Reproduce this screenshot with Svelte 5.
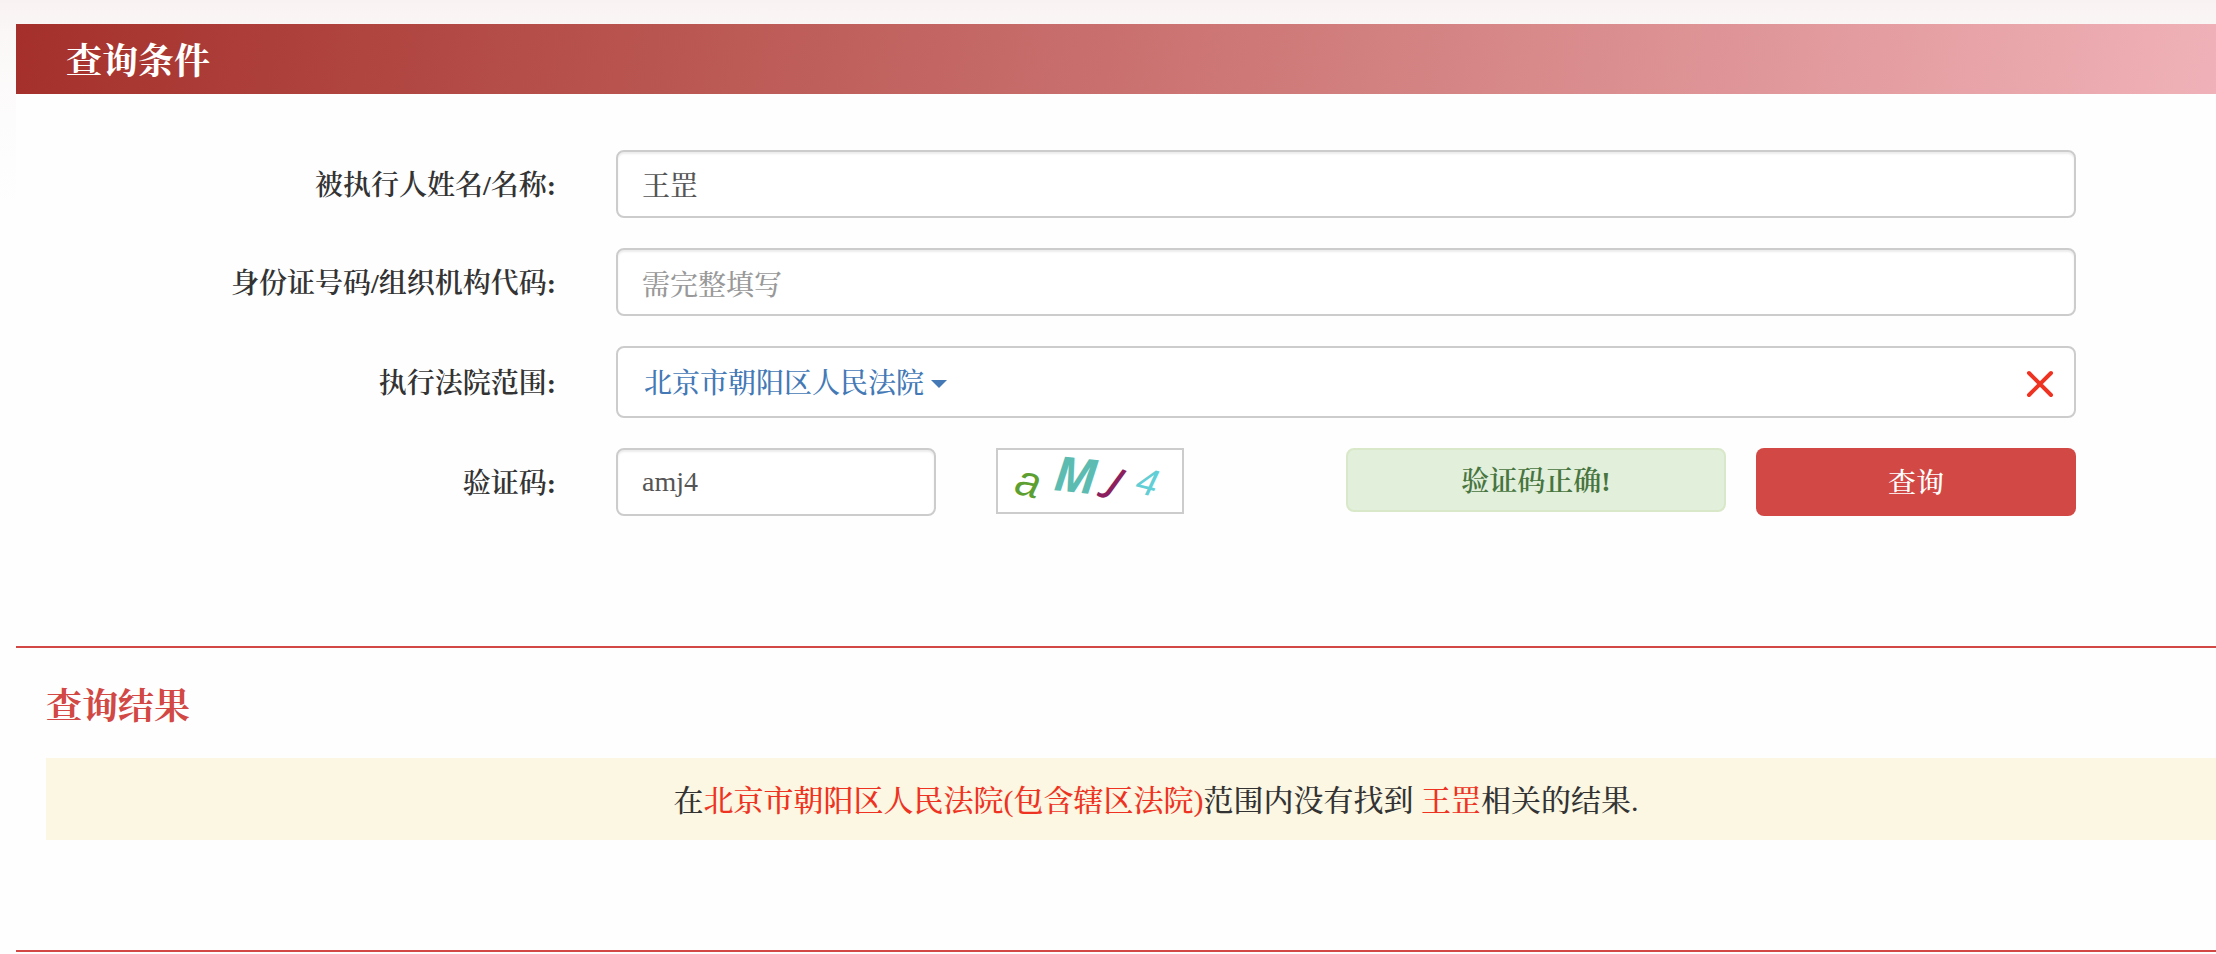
<script>
  let name = '王罡';
  let cardNum = '';
  let court = '北京市朝阳区人民法院';
  let code = 'amj4';

  const courts = ['北京市朝阳区人民法院'];

  const clearCourt = () => {
    court = '';
  };
</script>

<main class="page">
  <div class="panel">
    <h2 class="panel-heading">查询条件</h2>

    <form class="query" on:submit|preventDefault>
      <div class="row">
        <label for="pName">被执行人姓名/名称:</label>
        <div class="field">
          <input id="pName" type="text" bind:value={name} />
        </div>
      </div>

      <div class="row">
        <label for="pCardNum">身份证号码/组织机构代码:</label>
        <div class="field">
          <input id="pCardNum" type="text" placeholder="需完整填写" bind:value={cardNum} />
        </div>
      </div>

      <div class="row">
        <label for="selectCourt">执行法院范围:</label>
        <div class="field">
          <div class="court">
            <select id="selectCourt" bind:value={court}>
              {#each courts as item}
                <option value={item}>{item}</option>
              {/each}
            </select>
            <svg class="caret" viewBox="0 0 16 8" aria-hidden="true"><path d="M0 0h16L8 8z" /></svg>
            <button class="clear" type="button" aria-label="清除" on:click={clearCourt}>
              <svg viewBox="0 0 28 28"><path d="M3 3l22 22M25 3L3 25" /></svg>
            </button>
          </div>
        </div>
      </div>

      <div class="row">
        <label for="yzm">验证码:</label>
        <div class="field code-field">
          <input id="yzm" type="text" bind:value={code} />
          <svg class="captcha" viewBox="0 0 184 62" role="img" aria-label="验证码">
            <text class="c1" x="15" y="43" transform="rotate(14 15 43)">a</text>
            <text class="c2" x="55" y="40" transform="rotate(6 55 40)">M</text>
            <text class="c3" x="107" y="41" transform="rotate(24 107 41)">J</text>
            <text class="c4" x="136" y="42" transform="rotate(14 136 42)">4</text>
          </svg>
          <div class="check-ok">验证码正确!</div>
          <button class="search" type="submit">查询</button>
        </div>
      </div>
    </form>

    <section class="result">
      <h2>查询结果</h2>
      <p>在<em>北京市朝阳区人民法院(包含辖区法院)</em>范围内没有找到 <em>王罡</em>相关的结果.</p>
    </section>
  </div>
</main>

<style>
  :global(body) {
    margin: 0;
    background: #fefefe linear-gradient(#f9f2f2, #fbf7f7 32px, #fdfcfc 120px, #fefefe 210px) no-repeat;
  }

  .page {
    overflow: hidden;
    padding: 24px 0 2px 16px;
    color: #333;
    font-family: "Liberation Serif", "Noto Serif CJK SC", "Noto Sans CJK SC", serif;
    font-size: 28px;
    font-weight: 500;
    line-height: 40px;
  }

  /* the panel runs on past the right edge of the window */
  .panel {
    margin-right: -80px;
    background: #fefefe;
  }

  h2 {
    margin: 0;
    font-size: 36px;
    font-weight: bold;
    line-height: 50px;
  }

  .panel-heading {
    padding: 13px 50px 7px;
    color: #fff;
    background: linear-gradient(100deg, #a5302b, #b95550 28%, #e6a1a5 84%, #f2b6bd);
  }

  .query {
    display: grid;
    gap: 30px;
    padding: 56px 0 130px;
  }

  .row {
    display: grid;
    grid-template-columns: 3fr 8fr 1fr;
    align-items: center;
  }

  label {
    padding: 4px 30px 0 0;
    font-weight: 600;
    text-align: right;
  }

  .field {
    min-width: 0;
    padding: 0 30px;
  }

  input,
  .court {
    box-sizing: border-box;
    width: 100%;
    border: 2px solid #ccc;
    border-radius: 8px;
    background: #fff;
  }

  input {
    display: block;
    height: 68px;
    padding: 12px 24px;
    color: #555;
    font: inherit;
    outline: 0;
    box-shadow: inset 0 2px 2px rgba(0, 0, 0, 0.08);
  }

  input:placeholder-shown {
    padding: 16px 24px 8px;
  }

  input::placeholder {
    color: #999;
    opacity: 1;
  }

  .court {
    display: flex;
    align-items: center;
    height: 72px;
    padding: 4px 20px 0 26px;
  }

  select {
    appearance: none;
    margin: 0;
    padding: 0;
    border: 0;
    color: #4479b6;
    background: none;
    font: inherit;
    cursor: pointer;
  }

  .caret {
    width: 16px;
    height: 8px;
    margin-left: 6px;
    fill: #4479b6;
  }

  .clear {
    width: 28px;
    height: 28px;
    margin-left: auto;
    padding: 0;
    border: 0;
    background: none;
    cursor: pointer;
  }

  .clear svg {
    display: block;
    fill: none;
    stroke: #ee3322;
    stroke-width: 4;
    stroke-linecap: round;
  }

  .code-field {
    display: flex;
    align-items: flex-start;
  }

  .code-field input {
    flex: 0 1 320px;
    min-width: 0;
  }

  .captcha {
    flex: none;
    overflow: visible;
    width: 184px;
    height: 62px;
    margin-left: 60px;
    border: 2px solid #ccc;
    background: #fff;
    font-family: "Open Sans", sans-serif;
    font-style: italic;
  }

  .c1 {
    fill: #5d9f30;
    font-family: "Liberation Sans", sans-serif;
    font-size: 44px;
  }

  .c2 {
    fill: #5cbcb1;
    font-size: 48px;
    font-weight: bold;
  }

  .c3 {
    fill: #8c1f5d;
    font-size: 38px;
    font-weight: 600;
  }

  .c4 {
    fill: #62ced5;
    font-family: "Liberation Sans", sans-serif;
    font-size: 38px;
  }

  .check-ok {
    box-sizing: border-box;
    flex: 0 1 380px;
    margin-left: auto;
    padding: 12px 10px 8px;
    border: 2px solid #d9e8c8;
    border-radius: 8px;
    color: #48753f;
    background: #e2efdb;
    font-weight: 600;
    text-align: center;
  }

  .search {
    flex: 0 1 320px;
    height: 68px;
    margin-left: 30px;
    padding: 4px 0 0;
    border: 0;
    border-radius: 8px;
    color: #fff;
    background: #d24844;
    font: inherit;
    cursor: pointer;
  }

  .result {
    padding: 34px 30px 110px;
    border-top: 2px solid #d24844;
    border-bottom: 2px solid #d24844;
  }

  .result h2 {
    color: #d24844;
  }

  .result p {
    margin: 26px 0 0;
    padding: 23px 21px 19px;
    background: #fbf7e3;
    font-size: 30px;
    text-align: center;
  }

  .result em {
    color: #ee3322;
    font-style: normal;
  }
</style>
